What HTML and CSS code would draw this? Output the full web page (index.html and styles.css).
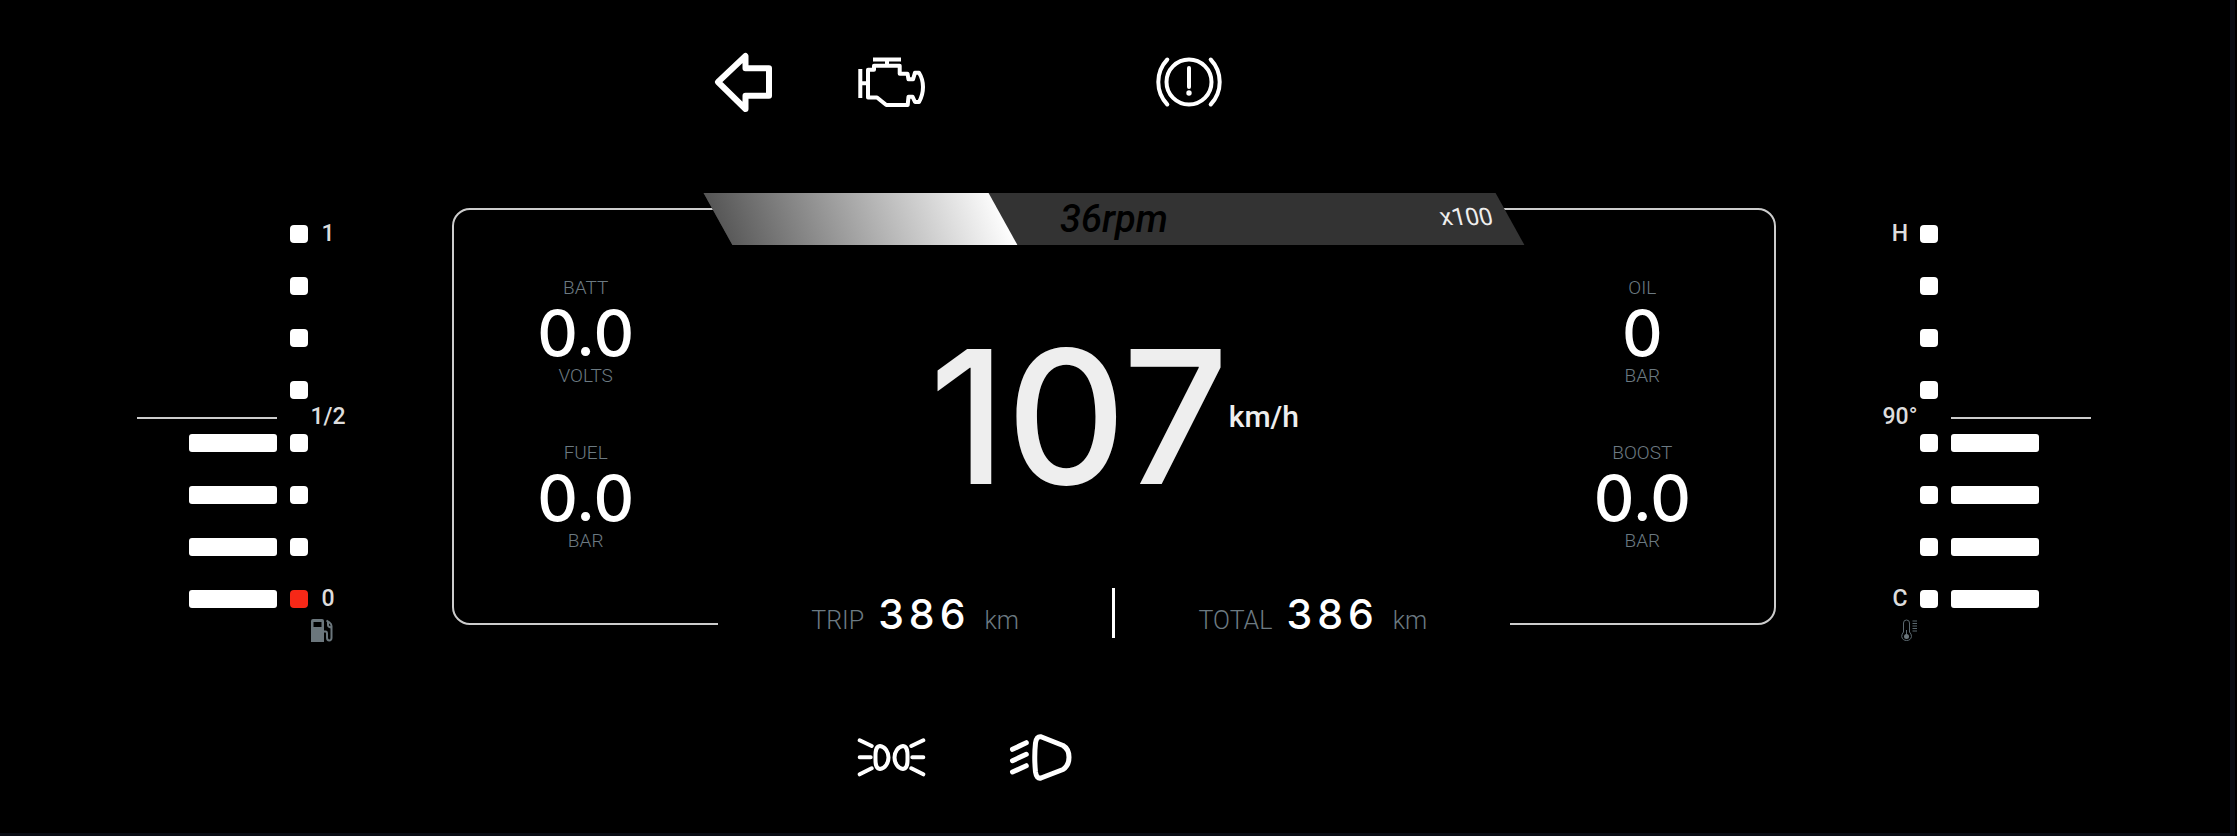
FILE: index.html
```html
<!DOCTYPE html>
<html lang="en">
<head>
<meta charset="utf-8">
<title>Instrument cluster</title>
<link rel="stylesheet" href="styles.css">
</head>
<body>
<div class="screen">
<main class="cluster">
  <div class="lamps">
    <svg class="lamp lamp-turn" width="58" height="61" viewBox="0 0 58 61" role="img" aria-label="Left turn signal"><path d="M4 30 31.500 4V16.300H55V43.700H31.500V57Z"/></svg>
    <svg class="lamp lamp-engine" width="67" height="50" viewBox="0 0 67 50" role="img" aria-label="Check engine"><path d="M15 2.500H43M29 2.500V8.500M2.300 12V41M2.300 26.300H9M10 40.500V12.700H16V8.700H41.700V16.700H49.500L50.500 22.300H55L57 15.700H61Q65 22 65 30T61 45H57L54.500 39.700H50.500L49.700 48H28.300L19 40.500Z"/></svg>
    <svg class="lamp lamp-brake lamp-col-4" width="66" height="50" viewBox="0 0 66 50" role="img" aria-label="Brake system"><circle cx="33" cy="25" r="22.500"/><path d="M11.300 2.500Q2.300 12 2.300 25T11.300 47.500M54.700 2.500Q63.700 12 63.700 25T54.700 47.500M33 11V30"/><circle class="dot" cx="33" cy="36" r="2.700"/></svg>
  </div>

  <div class="dash">
    <section class="gauge" aria-label="Fuel level">
      <div class="bars">
        <i></i><i></i><i></i><i></i><i class="on"></i><i class="on"></i><i class="on"></i><i class="on"></i>
      </div>
      <div class="ticks"><i></i><i></i><i></i><i></i><i></i><i></i><i></i><i class="low"></i></div>
      <div class="marks"><span>1</span><span>1/2</span><span>0</span></div>
      <svg class="gauge-icon" width="22" height="23" viewBox="0 0 22 23" aria-hidden="true"><path fill-rule="evenodd" d="M2 0H11Q13 0 13 2V23H0V2Q0 0 2 0ZM2.500 3V8H10.500V3Z"/><path class="line" d="M13 12.500H14.500Q16 12.500 16 14.500V18.500Q16 21.500 18.200 21.500T20.500 19V7Q20.500 5 18.500 3.500L15.500 1.500M17 3V6Q17 8 20 8.500"/></svg>
    </section>

    <section class="panel">
      <div class="rpm">
        <div class="rpm-track"><div class="rpm-fill" style="width:36%"></div></div>
        <span class="rpm-value">36rpm</span>
        <span class="rpm-scale">x100</span>
      </div>

      <div class="metrics">
        <div class="metric"><span class="label">BATT</span><span class="value">0.0</span><span class="label">VOLTS</span></div>
        <div class="metric"><span class="label">FUEL</span><span class="value">0.0</span><span class="label">BAR</span></div>
      </div>
      <div class="speed"><span class="speed-value">107</span><span class="speed-unit">km/h</span></div>
      <div class="metrics">
        <div class="metric"><span class="label">OIL</span><span class="value">0</span><span class="label">BAR</span></div>
        <div class="metric"><span class="label">BOOST</span><span class="value">0.0</span><span class="label">BAR</span></div>
      </div>

      <div class="odometer">
        <div class="trip"><span>TRIP</span><b>386</b><span>km</span></div>
        <div class="divider"></div>
        <div class="trip"><span>TOTAL</span><b>386</b><span>km</span></div>
      </div>
    </section>

    <section class="gauge gauge-right" aria-label="Coolant temperature">
      <div class="bars">
        <i></i><i></i><i></i><i></i><i class="on"></i><i class="on"></i><i class="on"></i><i class="on"></i>
      </div>
      <div class="ticks"><i></i><i></i><i></i><i></i><i></i><i></i><i></i><i></i></div>
      <div class="marks"><span>H</span><span>90°</span><span>C</span></div>
      <svg class="gauge-icon" width="17" height="23" viewBox="0 0 17 23" aria-hidden="true"><path class="thin" d="M2.500 13V4Q2.500 1 5.500 1T8.500 4V13Q10.500 15 10.500 17.500A5 5 0 0 1 .700 17.500Q.700 15 2.500 13ZM11.500 2H16M11.500 4.500H16M11.500 7H16M11.500 9.500H16M11.500 12H16M5.500 11V17"/><circle cx="5.500" cy="17.500" r="2.500"/></svg>
    </section>
  </div>

  <div class="lamps">
    <svg class="lamp lamp-park lamp-col-2" width="67" height="39" viewBox="0 0 67 39" role="img" aria-label="Position lights"><path d="M1.700 2.300 13.700 8M1.700 19.300H12.700M1.700 36.300 13.700 30.300M65.300 2.300 53.300 8M65.300 19.300H54.300M65.300 36.300 53.300 30.300M22 8C27 8.500 30.500 14 30.500 19.500S27 30.500 22 31C17 30.500 17.500 24 17.500 19.500S17 8.500 22 8ZM45 8C40 8.500 36.500 14 36.500 19.500S40 30.500 45 31C50 30.500 49.500 24 49.500 19.500S50 8.500 45 8Z"/></svg>
    <svg class="lamp lamp-beam" width="62" height="47" viewBox="0 0 62 47" role="img" aria-label="Low beam"><path d="M2.500 15.300 16.300 8.700M2.500 26.700 16.300 20.300M2.500 38 16.300 31.700M31 2.700 53 11.500Q59 15 59 23.300T53 35.500L31 44Q26.500 45 25.500 38Q24 23 25.500 9Q26.500 2 31 2.700Z"/></svg>
  </div>
</main>
</div>
</body>
</html>
```
FILE: styles.css
```css
* { box-sizing: border-box; }

body {
  margin: 0;
  background: #000;
  color: #fff;
  font-family: Roboto, "Liberation Sans", sans-serif;
}

.screen {
  min-height: 100vh;
  padding-right: 2px;
}

.cluster {
  min-height: 100vh;
  display: grid;
  grid-template-rows: 164px 1fr 152px;
  border-right: 5px solid #0a0d14;
  border-bottom: 3px solid #0a0d14;
}

/* indicator lamps */
.lamps {
  width: 40%;
  margin: 0 auto;
  display: grid;
  grid-template-columns: repeat(6, 1fr);
  place-items: center;
}

.lamp {
  overflow: visible;
  fill: none;
  stroke: #fff;
  stroke-width: 4;
  stroke-linecap: round;
  stroke-linejoin: round;
}

.lamp-turn { stroke-width: 6; }
.lamp-beam { stroke-width: 5; }
.lamp-brake { stroke-width: 4; }
.lamp-engine { stroke-linecap: butt; }
.lamp-col-2 { grid-column: 2; }
.lamp-col-4 { grid-column: 4; }
.lamp .dot { fill: #fff; stroke: none; }

.dash {
  display: flex;
  justify-content: space-between;
  align-items: flex-start;
  padding: 44px 139px 0 137px;
}

/* side gauges */
.gauge {
  display: grid;
  grid-template-columns: 153px 18px 40px;
  grid-template-rows: 383px auto;
  row-gap: 11px;
  padding-top: 17px;
}

.gauge-right {
  grid-template-columns: 40px 18px 153px;
}

.bars, .ticks, .marks {
  display: flex;
  flex-direction: column;
  justify-content: space-between;
  grid-row: 1;
}

.bars {
  position: relative;
  align-items: flex-end;
  margin-right: 13px;
}

.bars::after {
  content: "";
  position: absolute;
  left: 0;
  right: 0;
  top: 50%;
  height: 2px;
  background: #ccc;
}

.bars i {
  width: 88px;
  height: 18px;
  border-radius: 3px;
}

.bars .on { background: #fff; }

.ticks i {
  height: 18px;
  border-radius: 4px;
  background: #fff;
}

.ticks .low { background: #f62817; }

.marks {
  align-items: center;
  color: #ddd;
  font-size: 23px;
  font-weight: 500;
  line-height: 18px;
}

.gauge-icon {
  grid-column: 3;
  margin-left: 3px;
  fill: #6b767c;
}

.gauge-icon .line {
  fill: none;
  stroke: #6b767c;
  stroke-width: 2;
}

.gauge-icon .thin {
  fill: none;
  stroke: #5b686f;
}

.gauge-right .bars {
  grid-column: 3;
  align-items: flex-start;
  margin-right: 0;
  margin-left: 13px;
}

.gauge-right .ticks { grid-column: 2; }
.gauge-right .marks { grid-column: 1; }

.gauge-right .gauge-icon {
  grid-column: 1;
  justify-self: end;
  margin: 0 2px 0 0;
}

/* centre panel */
.panel {
  position: relative;
  width: 67.800%;
  min-height: 417px;
  display: grid;
  grid-template-columns: 20% 60% 20%;
  border: 2px solid #ccc;
  border-radius: 18px;
}

.rpm {
  position: absolute;
  top: -17px;
  left: 20%;
  width: 60%;
  height: 52px;
  display: flex;
  align-items: center;
  justify-content: center;
}

.rpm-track {
  position: absolute;
  inset: 0;
  background: #333;
  transform: skewX(29deg);
}

.rpm-fill {
  height: 100%;
  background: linear-gradient(100deg, #555, #fff);
}

.rpm-value {
  position: relative;
  color: #000;
  font-size: 38px;
  font-style: italic;
  font-weight: 500;
}

.rpm-scale {
  position: absolute;
  top: 12px;
  right: 18px;
  color: #eee;
  font-size: 24px;
  line-height: 24px;
  transform: skewX(14deg);
}

.metrics {
  display: flex;
  flex-direction: column;
  gap: 53px;
  padding-top: 66px;
}

.metric {
  display: flex;
  flex-direction: column;
  align-items: center;
}

.label {
  color: #6c7a82;
  font-size: 19px;
  font-weight: 300;
  line-height: 24px;
}

.value {
  padding-top: 2px;
  font-family: Inter, Roboto, sans-serif;
  font-size: 63px;
  font-weight: 500;
  line-height: 62px;
}

.speed {
  display: flex;
  align-items: center;
  justify-content: center;
  color: #eee;
}

.speed-value {
  font-family: Inter, Roboto, sans-serif;
  font-size: 186px;
  font-weight: 500;
  line-height: 186px;
}

.speed-unit {
  font-size: 30px;
  font-weight: 500;
}

.odometer {
  position: absolute;
  left: 20%;
  bottom: -22px;
  width: 60%;
  display: grid;
  grid-template-columns: 1fr 3px 1fr;
  align-items: center;
  background: #000;
}

.divider {
  height: 50px;
  background: #fff;
}

.trip {
  display: flex;
  align-items: baseline;
  justify-content: center;
  gap: 14px;
  padding-top: 10px;
  color: #6c7a82;
  font-size: 25px;
  font-weight: 300;
  line-height: 48px;
}

.trip b {
  color: #fff;
  font-family: Inter, Roboto, sans-serif;
  font-size: 41px;
  font-weight: 500;
  letter-spacing: 5px;
}
```
